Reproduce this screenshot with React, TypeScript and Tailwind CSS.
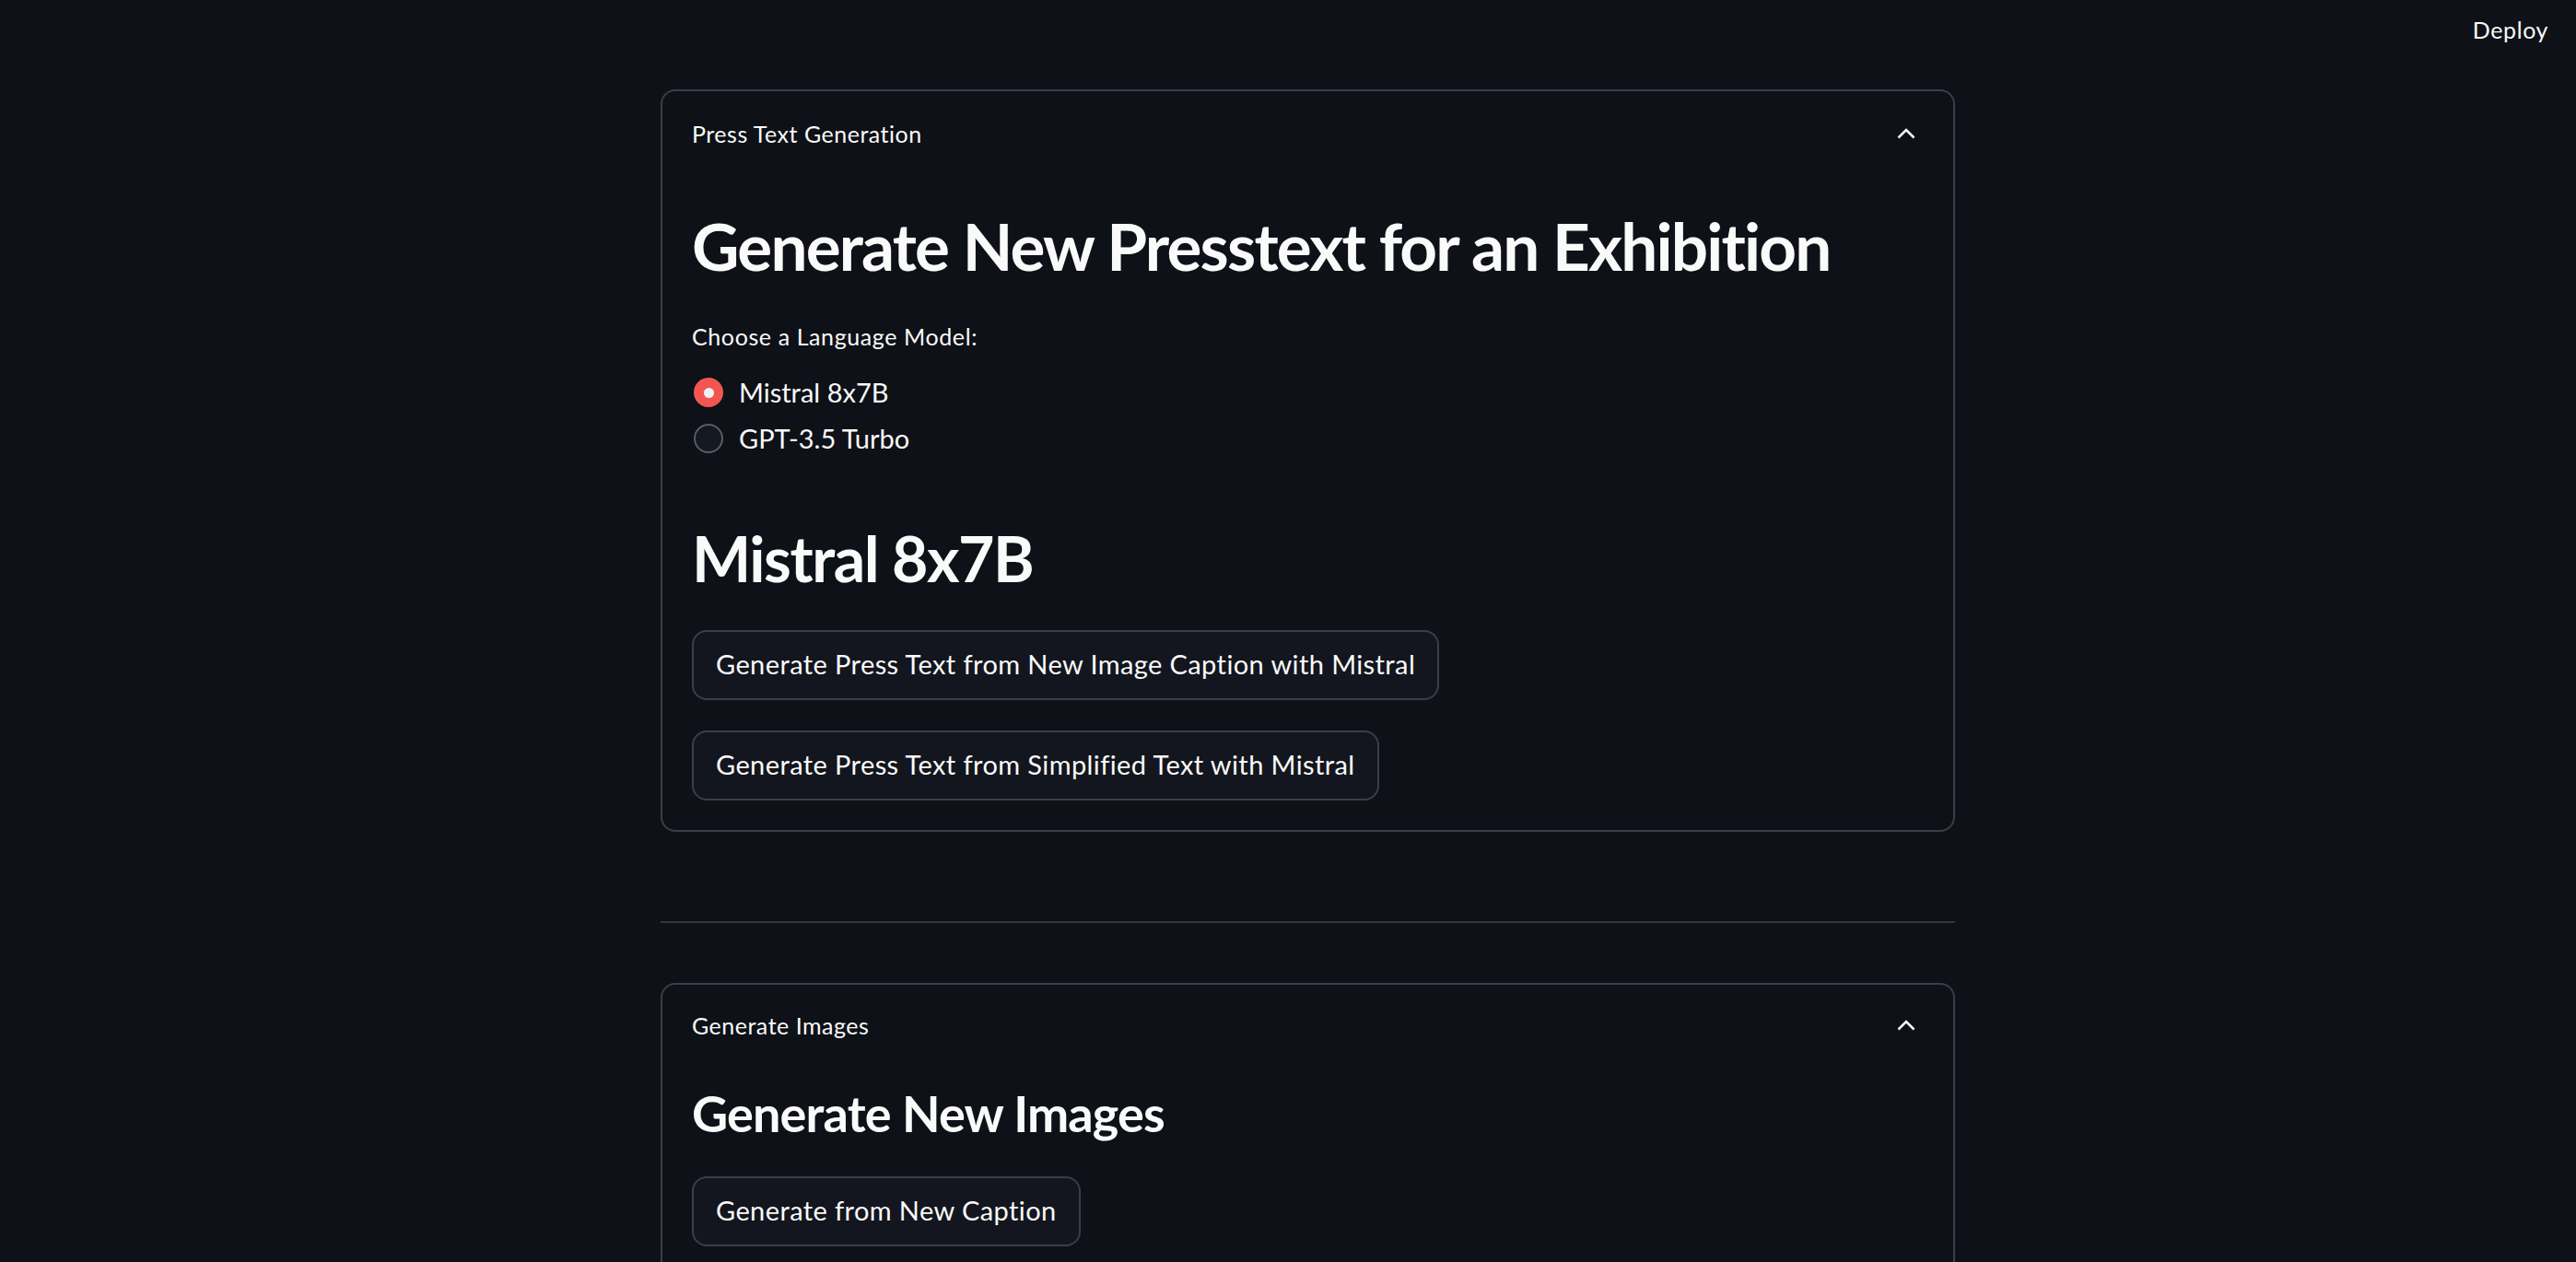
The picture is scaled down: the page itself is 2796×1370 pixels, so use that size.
import React from "react";

function Chevron() {
  return (
    <svg width="20" height="12" viewBox="0 0 20 12" className="mr-[9px]">
      <path d="M1.5 10.5 L10 2 L18.5 10.5" fill="none" stroke="#fafafa" strokeWidth="2.6" />
    </svg>
  );
}

function Radio({ label, checked }: { label: string; checked?: boolean }) {
  return (
    <div className="flex items-center h-[50px]">
      {checked ? (
        <div className="ml-[2px] w-[32px] h-[32px] rounded-full bg-[#f35652] flex items-center justify-center">
          <div className="w-[11px] h-[11px] rounded-full bg-[#f0f2f6]" />
        </div>
      ) : (
        <div className="ml-[2px] w-[32px] h-[32px] rounded-full border-[2px] border-[#5a5d64] bg-[#141820]" />
      )}
      <span className="ml-[17px] text-[29px] leading-[1.2]">{label}</span>
    </div>
  );
}

function Button({ children }: { children: React.ReactNode }) {
  return (
    <div className="flex">
      <button className="h-[76px] px-[24px] rounded-[16px] border-[2px] border-[#3b3e46] bg-[#13161e] text-[29px] leading-[1.2] tracking-[0.4px] text-[#fafafa]">
        {children}
      </button>
    </div>
  );
}

function Expander({ title, children, pt }: { title: string; children: React.ReactNode; pt: string }) {
  return (
    <div className="border-[2px] border-[#3b3e46] rounded-[16px] px-[32px]">
      <div className={"flex items-center justify-between " + pt}>
        <span className="text-[25px] leading-[1.2] tracking-[0.5px]">{title}</span>
        <Chevron />
      </div>
      {children}
    </div>
  );
}

export default function App() {
  return (
    <div className="min-h-screen bg-[#0e1117] text-[#fafafa] font-['Lato',sans-serif]">
      <div className="flex justify-end items-center h-[64px] pr-[30px]">
        <span className="text-[25px] leading-[1.2] tracking-[0.6px]">Deploy</span>
      </div>

      <div className="ml-[717px] w-[1405px] mt-[33px] pb-[200px]">
        <Expander title="Press Text Generation" pt="pt-[31px]">
          <h1 className="mt-[64px] text-[71px] leading-[1.2] font-bold tracking-[-1.8px]">
            Generate New Presstext for an Exhibition
          </h1>
          <p className="mt-[41px] text-[25px] leading-[1.2] tracking-[0.6px]">Choose a Language Model:</p>
          <div className="mt-[21px] flex flex-col">
            <Radio label="Mistral 8x7B" checked />
            <Radio label="GPT-3.5 Turbo" />
          </div>
          <h2 className="mt-[64px] text-[68px] leading-[1.2] font-bold tracking-[-1.5px]">Mistral 8x7B</h2>
          <div className="mt-[37px] flex flex-col gap-[33px]">
            <Button>Generate Press Text from New Image Caption with Mistral</Button>
            <Button>Generate Press Text from Simplified Text with Mistral</Button>
          </div>
          <div className="h-[32px]" />
        </Expander>

        <div className="mt-[97px] h-[2px] bg-[#34373e]" />

        <div className="mt-[65px]">
          <Expander title="Generate Images" pt="pt-[29px]">
            <h3 className="mt-[49px] text-[54px] leading-[1.2] font-bold tracking-[-0.85px]">Generate New Images</h3>
            <div className="mt-[35px]">
              <Button>Generate from New Caption</Button>
            </div>
            <div className="h-[200px]" />
          </Expander>
        </div>
      </div>
    </div>
  );
}
